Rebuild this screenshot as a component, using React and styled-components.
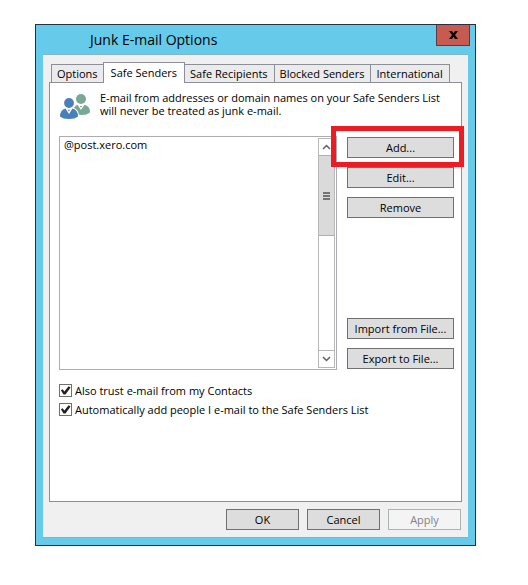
import React, { useState } from "react";
import styled, { createGlobalStyle } from "styled-components";

const GlobalStyle=createGlobalStyle`
*{
    box-sizing: border-box;
}
body{
    margin: 0;
    background-color: white;
    color: black;
    font-family: "Open Sans", "Noto Sans", sans-serif;
    font-size: 11px;
    font-weight: 500;
    line-height: 13px;
}
button{
    font: inherit;
    color: inherit;
    padding: 0;
}
`
const Page=styled.main`
padding: 24px 52px 39px 35px;
`
const Dialog=styled.section`
border: 1px solid #26313d;
background-color: #66caea;
padding: 0 7px 7px;
`
const TitleBar=styled.header`
height: 29px;
display: flex;
justify-content: space-between;
align-items: flex-start;
margin-right: -2px;
`
const Title=styled.h1`
margin: 0;
padding: 4px 0 0 47px;
font-size: 14px;
font-weight: 400;
line-height: 22px;
`
const CloseButton=styled.button`
width: 34px;
height: 21px;
display: flex;
align-items: center;
justify-content: center;
background-color: #c75b52;
border: 1px solid #5b3a40;
border-top: 0;
`
const Body=styled.div`
background-color: #f0f0f0;
border-top: 1px solid #86b3c6;
border-bottom: 1px solid #86b3c6;
padding: 7px 6px;
`
const TabList=styled.div`
display: flex;
align-items: flex-end;
padding-left: 2px;
`
const Tab=styled.button`
height: ${props=>props.$active ? "21px" : "18px"};
padding: ${props=>props.$active ? "0 7px 2px" : "0 6px 0 5px"};
margin: ${props=>props.$active ? "0 -1px -1px" : "0 -1px 0 0"};
background-color: ${props=>props.$active ? "white" : "#ebebeb"};
border: 1px solid #8c8e9a;
border-bottom: 0;
position: relative;
z-index: ${props=>props.$active ? 1 : 0};
white-space: nowrap;
`
const TabPanel=styled.div`
min-height: 420px;
padding: 8px 7px 8px 9px;
background-color: white;
border: 1px solid #8c8e9a;
`
const Intro=styled.div`
display: flex;
gap: 10px;
height: 45px;
`
const IntroText=styled.p`
margin: 0;
`
const Columns=styled.div`
display: flex;
gap: 10px;
`
const ListBox=styled.div`
flex: 1;
height: 234px;
display: flex;
border: 1px solid #abadb3;
padding: 1px;
`
const Senders=styled.ul`
flex: 1;
list-style: none;
margin: 0;
padding: 0 3px;
`
const ScrollBar=styled.div`
width: 17px;
display: flex;
flex-direction: column;
border: 1px solid #b8b8b8;
background-color: white;
`
const ScrollButton=styled.button`
height: 16px;
display: flex;
align-items: center;
justify-content: center;
background-color: white;
border: 0;
`
const ScrollTrack=styled.div`
flex: 1;
border-bottom: 1px solid #b8b8b8;
`
const ScrollThumb=styled.div`
height: 81px;
display: flex;
flex-direction: column;
align-items: center;
justify-content: center;
gap: 1px;
background-color: #dadada;
border: solid #b0b0b0;
border-width: 1px 0;
`
const Grip=styled.span`
width: 7px;
height: 2px;
background-color: #737373;
`
const Actions=styled.div`
width: 107px;
display: flex;
flex-direction: column;
gap: 9px;
padding: 1px 0;
`
const PushButton=styled.button`
width: ${props=>props.$wide ? "100%" : "73px"};
height: 21px;
background-color: #dddddd;
border: 1px solid ${props=>props.$focused ? "#3c7fb1" : "#707070"};
&:disabled{
    background-color: #f4f4f4;
    border-color: #adb2b5;
    color: #838383;
}
`
const Highlight=styled.div`
position: relative;
display: flex;
&::after{
    content: "";
    position: absolute;
    inset: -11px -10px -9px -16px;
    border: 5px solid #ed1c24;
    pointer-events: none;
}
`
const Spacer=styled.div`
flex: 1;
`
const Checks=styled.div`
display: flex;
flex-direction: column;
gap: 6px;
padding-top: 14px;
`
const CheckLabel=styled.label`
display: flex;
align-items: center;
gap: 3px;
`
const CheckInput=styled.input`
appearance: none;
width: 13px;
height: 13px;
margin: 0;
background-color: white;
border: 1px solid #707070;
&:checked::before{
    content: "";
    display: block;
    width: 11px;
    height: 11px;
    background-color: #212121;
    clip-path: polygon(8% 48%, 24% 38%, 40% 58%, 78% 12%, 96% 22%, 50% 86%, 32% 86%);
}
`
const Footer=styled.footer`
display: flex;
justify-content: flex-end;
gap: 8px;
padding: 7px 1px 0 0;
`

const PeopleIcon=()=>(
    <svg width="31" height="29" viewBox="-1 -3 31 29" aria-hidden="true">
        <circle cx="21" cy="5" r="5" fill="#79a897"/>
        <path d="M14 14q1-2.500 3.500-3.200L21 16l3.500-5.200Q30 12 30 18.500q-3 2.500-8 2.500-5 0-8-3z" fill="#79a897"/>
        <path d="M19.800 12h2.400l-1.200 1.800z" fill="#79a897"/>
        <circle cx="9" cy="9" r="5.800" fill="white"/>
        <circle cx="9" cy="9" r="4.900" fill="#4a80b9"/>
        <path d="M0 22.500Q0 16 5.500 14.500L9 20l3.500-5.500Q18 16 18 22.500 15 25 9 25t-9-2.500z" fill="#4a80b9" stroke="white" strokeWidth="2" paintOrder="stroke"/>
        <path d="M7.800 15.800h2.400L9 17.600z" fill="#4a80b9"/>
    </svg>
)

const Chevron=({ down })=>(
    <svg width="9" height="6" viewBox="0 0 9 6" aria-hidden="true">
        <path d={down ? "M1 1l3.500 3.500L8 1" : "M1 5l3.500-3.500L8 5"} fill="none" stroke="#606060" strokeWidth="1.500"/>
    </svg>
)

const tabs=["Options", "Safe Senders", "Safe Recipients", "Blocked Senders", "International"];

const App=()=>{
    const [active, setActive]=useState("Safe Senders");
    return(
        <>
        <GlobalStyle/>
        <Page>
        <Dialog role="dialog" aria-labelledby="dialog-title">
        <TitleBar>
            <Title id="dialog-title">Junk E-mail Options</Title>
            <CloseButton aria-label="Close">
                <svg width="9" height="8" viewBox="0 0 9 8" aria-hidden="true">
                    <path d="M0 0h3l1.500 2.300L6 0h3L6 4l3 4H6L4.500 5.700 3 8H0l3-4z" fill="black"/>
                </svg>
            </CloseButton>
        </TitleBar>
        <Body>
            <TabList role="tablist">
                {tabs.map(name=>(
                    <Tab key={name} role="tab" aria-selected={name===active} $active={name===active} onClick={()=>setActive(name)}>{name}</Tab>
                ))}
            </TabList>
            <TabPanel role="tabpanel">
                <Intro>
                    <PeopleIcon/>
                    <IntroText>
                        E-mail from addresses or domain names on your Safe Senders List<br/>
                        will never be treated as junk e-mail.
                    </IntroText>
                </Intro>
                <Columns>
                    <ListBox>
                        <Senders>
                            <li>@post.xero.com</li>
                        </Senders>
                        <ScrollBar>
                            <ScrollButton aria-label="Scroll up"><Chevron/></ScrollButton>
                            <ScrollTrack>
                                <ScrollThumb><Grip/><Grip/><Grip/></ScrollThumb>
                            </ScrollTrack>
                            <ScrollButton aria-label="Scroll down"><Chevron down/></ScrollButton>
                        </ScrollBar>
                    </ListBox>
                    <Actions>
                        <Highlight><PushButton $wide $focused>Add...</PushButton></Highlight>
                        <PushButton $wide>Edit...</PushButton>
                        <PushButton $wide>Remove</PushButton>
                        <Spacer/>
                        <PushButton $wide>Import from File...</PushButton>
                        <PushButton $wide>Export to File...</PushButton>
                    </Actions>
                </Columns>
                <Checks>
                    <CheckLabel><CheckInput type="checkbox" defaultChecked/>Also trust e-mail from my Contacts</CheckLabel>
                    <CheckLabel><CheckInput type="checkbox" defaultChecked/>Automatically add people I e-mail to the Safe Senders List</CheckLabel>
                </Checks>
            </TabPanel>
            <Footer>
                <PushButton>OK</PushButton>
                <PushButton>Cancel</PushButton>
                <PushButton disabled>Apply</PushButton>
            </Footer>
        </Body>
        </Dialog>
        </Page>
        </>
    )
};

export default App;
